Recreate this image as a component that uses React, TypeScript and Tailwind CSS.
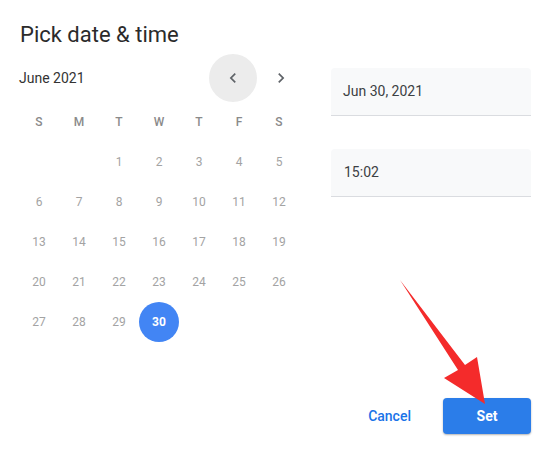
import React from 'react';

const weekdays = ['S', 'M', 'T', 'W', 'T', 'F', 'S'];

// June 2021 starts on a Tuesday
const days: (number | null)[] = [null, null, ...Array.from({ length: 30 }, (_, i) => i + 1)];

function Chevron({ dir }: { dir: 'left' | 'right' }) {
  return (
    <svg width="20" height="20" viewBox="0 0 24 24" fill="#5f6368">
      {dir === 'left' ? (
        <path d="M15.41 7.41L14 6l-6 6 6 6 1.41-1.41L10.83 12z" />
      ) : (
        <path d="M8.59 16.59L10 18l6-6-6-6-1.41 1.41L13.17 12z" />
      )}
    </svg>
  );
}

export default function App() {
  return (
    <div
      className="relative w-[550px] h-[449px] bg-white overflow-hidden"
      style={{ fontFamily: 'Roboto, "Liberation Sans", sans-serif' }}
    >
      <h1 className="pl-[20px] pt-[21px] text-[22px] leading-[28px] text-[#2b2b2b] font-normal">
        Pick date &amp; time
      </h1>

      <div className="flex mt-[5px]">
        {/* Calendar */}
        <div className="ml-[19px] w-[286px]">
          <div className="flex items-center h-[48px]">
            <span className="flex-1 text-[14px] text-[#333333]">June 2021</span>
            <div className="w-[48px] h-[48px] rounded-full bg-[#ececec] flex items-center justify-center">
              <Chevron dir="left" />
            </div>
            <div className="w-[48px] h-[48px] rounded-full flex items-center justify-center">
              <Chevron dir="right" />
            </div>
          </div>

          <div className="grid grid-cols-7 w-[280px]">
            {weekdays.map((d, i) => (
              <div
                key={i}
                className="h-[40px] flex items-center justify-center text-[12px] font-medium text-[#8a8a8a]"
              >
                {d}
              </div>
            ))}
            {days.map((d, i) => (
              <div key={i} className="h-[40px] flex items-center justify-center">
                {d === 30 ? (
                  <span className="w-[40px] h-[40px] rounded-full bg-[#4285f4] text-white text-[12px] font-bold flex items-center justify-center">
                    30
                  </span>
                ) : (
                  <span className="text-[12px] text-[#a3a3a3]">{d ?? ''}</span>
                )}
              </div>
            ))}
          </div>
        </div>

        {/* Fields + actions */}
        <div className="ml-[26px] mt-[14px] w-[200px] h-[366px] flex flex-col">
          <div className="h-[48px] bg-[#f8f9fa] rounded-t-[4px] border-b border-[#dadce0] flex items-center pl-[12px] text-[14px] text-[#3c4043]">
            Jun 30, 2021
          </div>
          <div className="mt-[33px] h-[48px] bg-[#f8f9fa] rounded-t-[4px] border-b border-[#dadce0] flex items-center pl-[13px] text-[14px] text-[#3c4043]">
            15:02
          </div>

          <div className="mt-auto flex items-center justify-end gap-[20px]">
            <button className="h-[36px] px-[12px] text-[14px] font-medium text-[#1a73e8]">Cancel</button>
            <button className="w-[88px] h-[36px] rounded-[4px] bg-[#2b7de9] text-white text-[14px] font-bold shadow-[0_1px_2px_rgba(0,0,0,0.3)]">
              Set
            </button>
          </div>
        </div>
      </div>

      {/* Annotation arrow */}
      <svg className="absolute inset-0 pointer-events-none" width="550" height="449" viewBox="0 0 550 449">
        <polygon
          points="400,280 465,365 477,357 485,404 444,378 458,370"
          fill="#f42b2b"
        />
      </svg>
    </div>
  );
}
